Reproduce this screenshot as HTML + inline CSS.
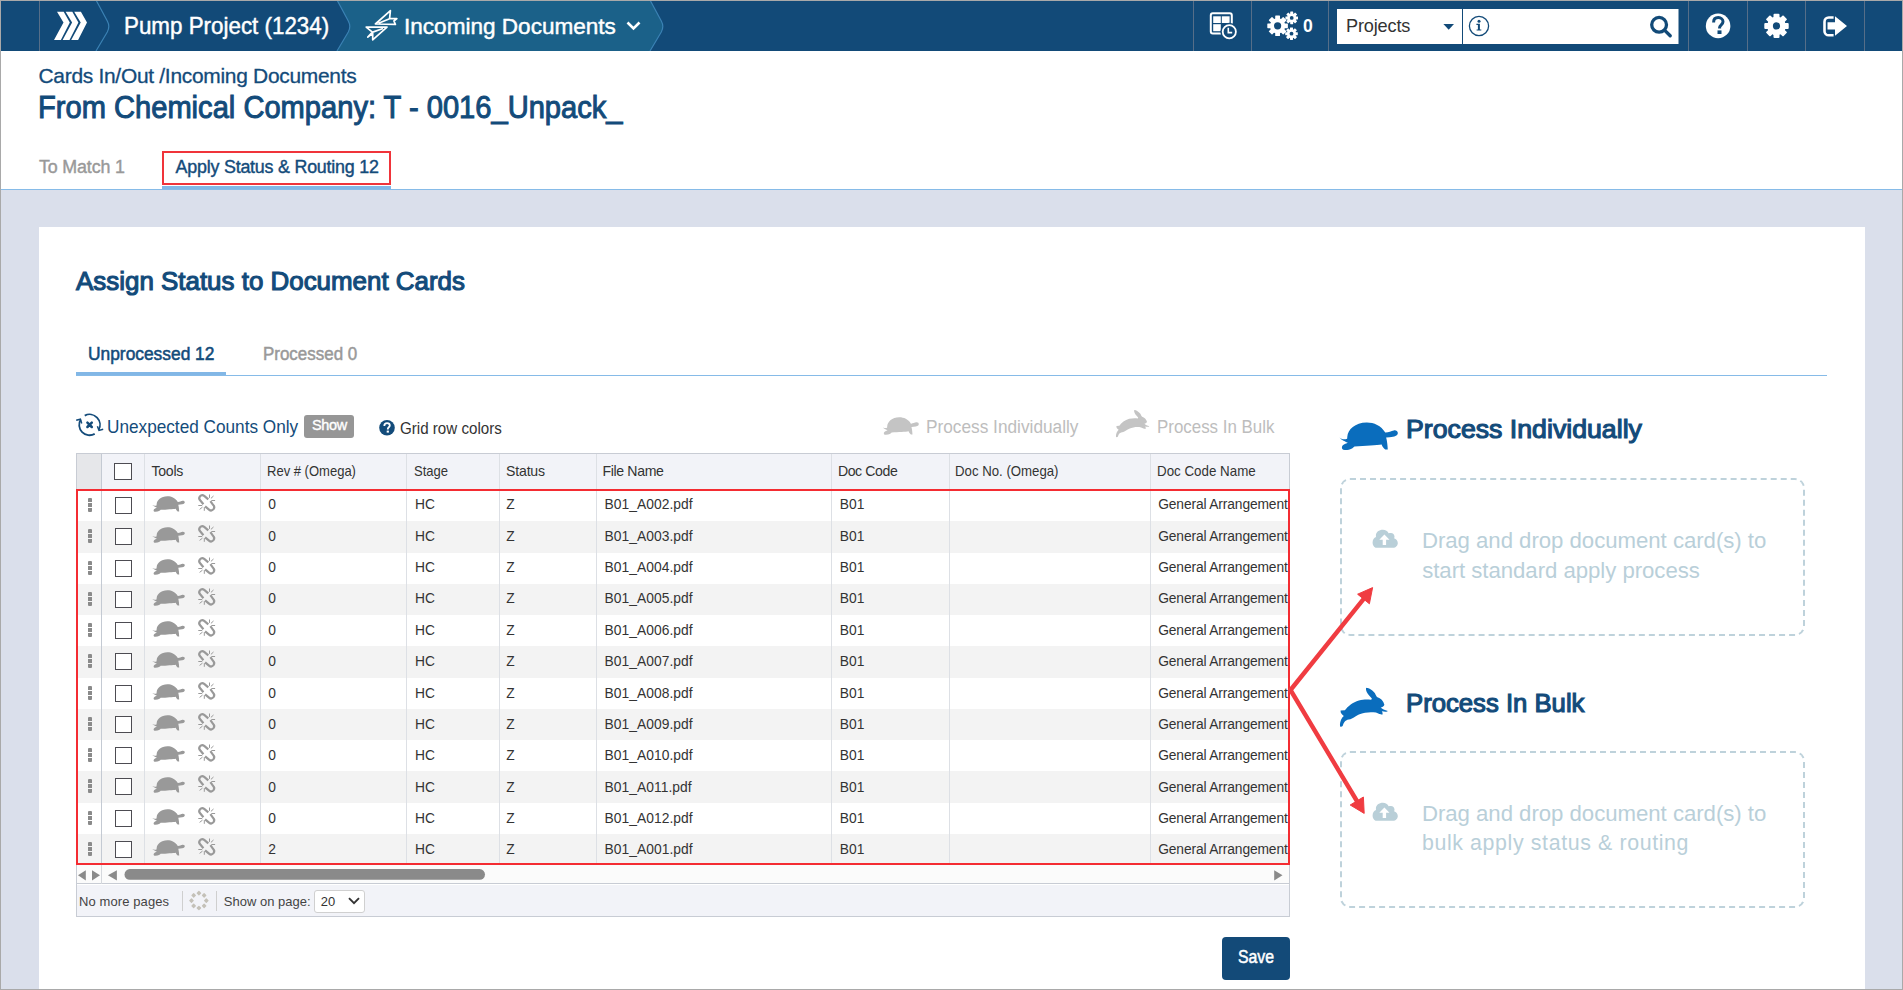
<!DOCTYPE html>
<html><head><meta charset="utf-8">
<style>
*{box-sizing:border-box;margin:0;padding:0}
html,body{width:1903px;height:990px;overflow:hidden;font-family:"Liberation Sans",sans-serif;background:#dadfeb;position:relative}
.abs{position:absolute}
svg.abs{overflow:visible}
#frame{position:absolute;left:0;top:0;width:1903px;height:990px;border:1px solid #a9a9a9;z-index:50;pointer-events:none}
#nav{position:absolute;left:0;top:0;width:1903px;height:51px;background:#124a78}
.t{position:absolute;white-space:nowrap;line-height:1;z-index:5}
.vd{position:absolute;top:1px;width:1px;height:50px;background:#566e88}
#hdr{position:absolute;left:0;top:51px;width:1903px;height:139px;background:#fff;border-bottom:1px solid #86bbe8}
#card{position:absolute;left:39px;top:227px;width:1826px;height:763px;background:#fff}
.row{position:absolute;left:77px;width:1211px;height:31.25px}
.bt{font-size:13.82px;letter-spacing:0.052px;color:#333}
.dh{position:absolute;left:88px;width:4px;height:14px;background:linear-gradient(#8a8a8a 0 3.6px,transparent 3.6px 5px,#8a8a8a 5px 8.6px,transparent 8.6px 10px,#8a8a8a 10px 13.8px,transparent 13.8px);border-radius:1px;z-index:4}
.cb{position:absolute;left:115px;width:17px;height:17px;border:1.6px solid #4d4c52;background:#fff;z-index:4}
.vl{position:absolute;width:1px;background:#dde0e5;z-index:3}
</style></head><body>
<svg width="0" height="0" style="position:absolute">
<defs>
<symbol id="turtle" viewBox="4 6.5 59 28.5" preserveAspectRatio="none">
<path d="M4.4,22.2 C6,23.8 9,24.6 12.1,23.4 L12.3,21 C12.8,14 20,7 31.5,6.9 C38.5,6.8 46,10 50.1,17 C53,17.2 56,15.5 58.6,15 C61,14.6 63,16 62.6,18.2 C62.2,20.5 59.5,21.5 54.5,21.8 L51,22.2 C52,26 52.5,31 52.6,34.3 L50.1,34.3 C48.5,33 47,31 46.5,29.1 C42,30 30,30.5 19.4,31.1 C18,32.5 16,34.5 10.1,34.7 C7.5,34.8 6.5,33.5 7,31.5 C7.5,29.5 11,28.2 12.9,27.5 C11,26.6 6,24.5 4.4,22.2 Z"/>
</symbol>
<symbol id="rabbit" viewBox="4.5 7 48.5 40" preserveAspectRatio="none">
<path d="M31.5,7.4 C34,7.5 38,10 40,13 C41,15 41.5,16.5 42.5,17 C45.5,18 48.5,20.5 49.4,24.5 C49,26 47.5,27 45.7,27.3 C47,28.8 50,30 52.8,30.8 C52.5,31.8 50,31.8 46.8,31.2 C47.5,32.2 48,33.5 47.3,34.6 C45.5,34.5 43.5,33.5 41,32.5 C36,31.5 30,32 24,34.5 C20,36.5 17.5,38.8 15.5,39.2 C11,39.5 9,42 8.2,45 C7.8,46.5 6.8,47 5.3,46.5 C4.8,44 5.5,40.5 7.5,37.5 L9,35.8 C7,34.5 5.5,33 5.8,30.5 L10,30.2 C13,26 18,22 24,20.2 C29,19 33,19.2 35.8,19.6 C37,19.5 37.2,18.5 36.5,17.8 C34,15 31.5,12.5 31.2,10 C31,8.5 31,7.6 31.5,7.4 Z"/>
</symbol>
<symbol id="unlink" viewBox="0 0 30 26">
<g fill="none" stroke="#999" stroke-width="2.2" stroke-linecap="butt">
<path d="M16.3,9.4 L12.2,5.9 C10.6,4.6 8.9,5.2 7.9,6.4 C7,7.6 7.1,9.4 8.4,10.6 L11.4,14.2"/>
<path d="M13.1,16.3 L17,19.6 C18.6,20.9 20.4,20.4 21.5,19.1 C22.5,17.8 22.3,16 21,14.8 L18.4,11.2"/>
</g>
<g fill="none" stroke="#999" stroke-width="1">
<path d="M17.5,4.5 V7.9 M18.9,8.4 L21.5,6 M19.4,10.5 H23.1 M6.3,15.5 H10.2 M7.6,19.4 L10.5,17.1 M12.3,17.1 V20.8"/>
</g>
</symbol>
</defs>
</svg>

<div id="nav">
  <div class="vd" style="left:39px"></div>
  <svg class="abs" style="left:0;top:0" width="700" height="51">
    <path d="M337,0 H650 L661.3,21 Q664.3,26.5 661.3,32 L650,51 H337 L348.3,32 Q351.3,26.5 348.3,21 Z" fill="#1b6189"/>
    <path d="M96,0 L107.3,21 Q110.3,26.5 107.3,32 L96,51" fill="none" stroke="#3b82b4" stroke-width="1.2"/>
    <path d="M337,0 L348.3,21 Q351.3,26.5 348.3,32 L337,51" fill="none" stroke="#3b82b4" stroke-width="1.2"/>
    <path d="M650,0 L661.3,21 Q664.3,26.5 661.3,32 L650,51" fill="none" stroke="#3b82b4" stroke-width="1.2"/>
    <g fill="#fff">
      <polygon points="57,11.7 63.7,11.7 69.8,22.4 60.9,40 54,40 63.5,22.4"/>
      <polygon points="65.6,11.7 72.3,11.7 78.4,22.4 69.5,40 62.6,40 72.1,22.4"/>
      <polygon points="74.2,11.7 80.9,11.7 87,22.4 78.1,40 71.2,40 80.7,22.4"/>
    </g>
    <g fill="none" stroke="#fff" stroke-width="1.7" stroke-linejoin="round">
      <path d="M390.4,10.6 L375.4,24 L395.4,24.4 L393.9,21 L396.9,18.7 L389.6,18.3 Z M389.6,18.7 L378.5,23.3"/>
      <path d="M372.7,39.8 L387,27.1 L366.2,27.1 L372.4,32.1 L367.8,37.1 L372.7,33.3 Z M372.7,32.1 L383,28.5"/>
    </g>
    <path d="M627.5,22.5 L633.5,28.5 L639.5,22.5" fill="none" stroke="#fff" stroke-width="2.6"/>
  </svg>
  <!-- right side -->
  <div class="vd" style="left:1193px"></div>
  <div class="vd" style="left:1251px"></div>
  <div class="vd" style="left:1328px"></div>
  <div class="vd" style="left:1688px"></div>
  <div class="vd" style="left:1747px"></div>
  <div class="vd" style="left:1805px"></div>
  <div class="vd" style="left:1864px"></div>
  <svg class="abs" style="left:1190px;top:0" width="713" height="51">
    <!-- dashboard -->
    <rect x="20.8" y="13.3" width="21" height="20.3" rx="2" fill="none" stroke="#fff" stroke-width="2"/>
    <rect x="23.2" y="16.3" width="7.6" height="6.7" fill="#fff"/>
    <rect x="31.8" y="16.3" width="7.8" height="6.7" fill="#fff"/>
    <rect x="23.2" y="24.2" width="7.6" height="7" fill="#fff"/>
    <circle cx="39.3" cy="31.8" r="9" fill="#124a78"/>
    <circle cx="39.3" cy="31.8" r="6.6" fill="#124a78" stroke="#fff" stroke-width="1.8"/>
    <path d="M38.3,27.8 V32.6 H42.2" fill="none" stroke="#fff" stroke-width="1.6"/>
    <!-- gears -->
    <g fill="#fff">
      <g transform="translate(87.6,25.8)">
        <circle r="7.6"/>
        <g id="teethB"><rect x="-2.4" y="-10.3" width="4.8" height="20.6" rx="0.6"/><rect x="-2.4" y="-10.3" width="4.8" height="20.6" rx="0.6" transform="rotate(45)"/><rect x="-2.4" y="-10.3" width="4.8" height="20.6" rx="0.6" transform="rotate(90)"/><rect x="-2.4" y="-10.3" width="4.8" height="20.6" rx="0.6" transform="rotate(135)"/></g>
        <circle r="3.6" fill="#124a78"/>
      </g>
      <g transform="translate(101.7,17.9)">
        <circle r="4.5"/>
        <rect x="-1.5" y="-6.3" width="3" height="12.6" rx="0.4"/><rect x="-1.5" y="-6.3" width="3" height="12.6" rx="0.4" transform="rotate(45)"/><rect x="-1.5" y="-6.3" width="3" height="12.6" rx="0.4" transform="rotate(90)"/><rect x="-1.5" y="-6.3" width="3" height="12.6" rx="0.4" transform="rotate(135)"/>
        <circle r="1.9" fill="#124a78"/>
      </g>
      <g transform="translate(101.5,33.7)">
        <circle r="4.5"/>
        <rect x="-1.5" y="-6.3" width="3" height="12.6" rx="0.4"/><rect x="-1.5" y="-6.3" width="3" height="12.6" rx="0.4" transform="rotate(45)"/><rect x="-1.5" y="-6.3" width="3" height="12.6" rx="0.4" transform="rotate(90)"/><rect x="-1.5" y="-6.3" width="3" height="12.6" rx="0.4" transform="rotate(135)"/>
        <circle r="1.9" fill="#124a78"/>
      </g>
    </g>
    <!-- select + search -->
    <rect x="147" y="9" width="125" height="35" fill="#fff"/>
    <path d="M253.4,24 H264 L258.7,29.8 Z" fill="#124a78"/>
    <rect x="273" y="9" width="215.5" height="35" fill="#fff"/>
    <circle cx="289" cy="26" r="9.6" fill="none" stroke="#124a78" stroke-width="1.3"/>
    <circle cx="289" cy="21.2" r="1.5" fill="#124a78"/>
    <path d="M286.4,23.8 H289.9 V29.4 H291.3 V30.6 H286.6 V29.4 H287.9 V25 H286.4 Z" fill="#124a78"/>
    <circle cx="469.1" cy="24.8" r="7.4" fill="none" stroke="#124a78" stroke-width="3.3"/>
    <path d="M475,30.6 L480.2,35.7" stroke="#124a78" stroke-width="3.4" stroke-linecap="round"/>
    <!-- help -->
    <circle cx="528.1" cy="25.9" r="12.3" fill="#fff"/>
    <path d="M523.6,22.4 C523.6,19.2 525.7,17.6 528.3,17.6 C531,17.6 533,19.3 533,21.8 C533,24.6 529.6,25 529.6,27.5 V28.4" fill="none" stroke="#124a78" stroke-width="3"/>
    <rect x="527.5" y="30.4" width="4" height="3.6" fill="#124a78"/>
    <!-- gear -->
    <g transform="translate(586.5,25.9)" fill="#fff">
      <circle r="9.3"/>
      <rect x="-3" y="-12.2" width="6" height="24.4" rx="1"/><rect x="-3" y="-12.2" width="6" height="24.4" rx="1" transform="rotate(45)"/><rect x="-3" y="-12.2" width="6" height="24.4" rx="1" transform="rotate(90)"/><rect x="-3" y="-12.2" width="6" height="24.4" rx="1" transform="rotate(135)"/>
      <circle r="3.6" fill="#124a78"/>
    </g>
    <!-- sign out -->
    <path d="M643.6,17.5 H638.8 C636.3,17.5 634.5,19.3 634.5,21.8 V31.2 C634.5,33.6 636.3,35.3 638.8,35.3 H643.6" fill="none" stroke="#fff" stroke-width="2.6"/>
    <path d="M637.5,22.3 H645 V16.3 L657,26 L645,35.8 V29.6 H637.5 Z" fill="#fff"/>
  </svg>
</div>

<div id="hdr">
  <div class="abs" style="left:162px;top:100px;width:229px;height:33.5px;border:2px solid #f0343a;z-index:6"></div>
  <div class="abs" style="left:162px;top:135px;width:229px;height:3px;background:#82b7e6"></div>
</div>

<div id="card"></div>

<!-- subtabs -->
<div class="abs" style="left:76px;top:375px;width:1751px;height:1px;background:#86bbe8"></div>
<div class="abs" style="left:76px;top:372px;width:150px;height:3px;background:#82b7e6"></div>

<!-- toolbar -->
<svg class="abs" style="left:72px;top:408px" width="36" height="32">
  <g fill="none" stroke="#134b7a" stroke-width="1.8">
  <path d="M12.72,7.62 A10.4,10.4 0 0 1 26.6,22"/>
  <path d="M22.7,25.9 A10.4,10.4 0 0 1 8.68,11.46"/>
  </g>
  <g fill="none" stroke="#134b7a" stroke-width="1.5" stroke-linejoin="miter">
  <path d="M25.4,18.2 L27,22.4 L31.2,21.3"/>
  <path d="M4.2,12.3 L8.4,11.2 L9.7,15.5"/>
  </g>
  <path d="M15.4,14.6 L19.8,19 M19.8,14.6 L15.4,19" stroke="#134b7a" stroke-width="2.5" stroke-linecap="round"/>
</svg>
<div class="abs" style="left:304px;top:415px;width:50px;height:22.5px;background:#969696;border-radius:3px"></div>
<svg class="abs" style="left:378px;top:419px" width="18" height="18">
  <circle cx="9" cy="8.7" r="7.8" fill="#134b7a"/>
  <path d="M6.3,6.9 C6.3,5 7.5,4.1 9.1,4.1 C10.7,4.1 11.8,5.1 11.8,6.5 C11.8,8.1 9.8,8.4 9.8,9.9 V10.4" fill="none" stroke="#fff" stroke-width="1.8"/>
  <rect x="8.7" y="11.6" width="2.2" height="2" fill="#fff"/>
</svg>
<svg class="abs" style="left:880px;top:415px" width="42" height="22"><use href="#turtle" x="2" y="2" width="37" height="18" fill="#c4c4c4"/></svg>
<svg class="abs" style="left:1113px;top:408px" width="40" height="32"><use href="#rabbit" x="2.5" y="1.7" width="34" height="27.8" fill="#c4c4c4"/></svg>

<!-- table -->
<div class="abs" style="left:76px;top:453px;width:1214px;height:464px;border:1px solid #c8ccd4;background:#fff"></div>
<div class="abs" style="left:77px;top:454px;width:1212px;height:35px;background:#f2f3f8"></div>
<div class="abs" style="left:77px;top:454px;width:24px;height:35px;background:#e6e7ea"></div>
<div class="cb" style="top:463px;left:114px;width:18px"></div>
<div class="row" style="top:490.00px;background:#fff"></div>
<div class="t bt" style="left:268.3px;top:498.40px">0</div>
<div class="t bt" style="left:414.9px;top:498.40px">HC</div>
<div class="t bt" style="left:506.3px;top:498.40px">Z</div>
<div class="t bt" style="left:604.5px;top:498.40px">B01_A002.pdf</div>
<div class="t bt" style="left:839.8px;top:498.40px">B01</div>
<div class="t bt" style="left:1158.2px;top:498.40px;width:130px;height:18px;overflow:hidden;letter-spacing:-0.138px">General Arrangement</div>
<div class="dh" style="top:498.20px"></div>
<div class="cb" style="top:497.10px"></div>
<svg class="abs" style="left:152px;top:496.00px;z-index:4" width="34" height="17"><use href="#turtle" width="33" height="16" fill="#999"/></svg>
<svg class="abs" style="left:192px;top:490.00px;z-index:4" width="30" height="26"><use href="#unlink"/></svg>
<div class="row" style="top:521.25px;background:#f3f3f3"></div>
<div class="t bt" style="left:268.3px;top:529.76px">0</div>
<div class="t bt" style="left:414.9px;top:529.76px">HC</div>
<div class="t bt" style="left:506.3px;top:529.76px">Z</div>
<div class="t bt" style="left:604.5px;top:529.76px">B01_A003.pdf</div>
<div class="t bt" style="left:839.8px;top:529.76px">B01</div>
<div class="t bt" style="left:1158.2px;top:529.76px;width:130px;height:18px;overflow:hidden;letter-spacing:-0.138px">General Arrangement</div>
<div class="dh" style="top:529.45px"></div>
<div class="cb" style="top:528.35px"></div>
<svg class="abs" style="left:152px;top:527.25px;z-index:4" width="34" height="17"><use href="#turtle" width="33" height="16" fill="#999"/></svg>
<svg class="abs" style="left:192px;top:521.25px;z-index:4" width="30" height="26"><use href="#unlink"/></svg>
<div class="row" style="top:552.50px;background:#fff"></div>
<div class="t bt" style="left:268.3px;top:561.12px">0</div>
<div class="t bt" style="left:414.9px;top:561.12px">HC</div>
<div class="t bt" style="left:506.3px;top:561.12px">Z</div>
<div class="t bt" style="left:604.5px;top:561.12px">B01_A004.pdf</div>
<div class="t bt" style="left:839.8px;top:561.12px">B01</div>
<div class="t bt" style="left:1158.2px;top:561.12px;width:130px;height:18px;overflow:hidden;letter-spacing:-0.138px">General Arrangement</div>
<div class="dh" style="top:560.70px"></div>
<div class="cb" style="top:559.60px"></div>
<svg class="abs" style="left:152px;top:558.50px;z-index:4" width="34" height="17"><use href="#turtle" width="33" height="16" fill="#999"/></svg>
<svg class="abs" style="left:192px;top:552.50px;z-index:4" width="30" height="26"><use href="#unlink"/></svg>
<div class="row" style="top:583.75px;background:#f3f3f3"></div>
<div class="t bt" style="left:268.3px;top:592.48px">0</div>
<div class="t bt" style="left:414.9px;top:592.48px">HC</div>
<div class="t bt" style="left:506.3px;top:592.48px">Z</div>
<div class="t bt" style="left:604.5px;top:592.48px">B01_A005.pdf</div>
<div class="t bt" style="left:839.8px;top:592.48px">B01</div>
<div class="t bt" style="left:1158.2px;top:592.48px;width:130px;height:18px;overflow:hidden;letter-spacing:-0.138px">General Arrangement</div>
<div class="dh" style="top:591.95px"></div>
<div class="cb" style="top:590.85px"></div>
<svg class="abs" style="left:152px;top:589.75px;z-index:4" width="34" height="17"><use href="#turtle" width="33" height="16" fill="#999"/></svg>
<svg class="abs" style="left:192px;top:583.75px;z-index:4" width="30" height="26"><use href="#unlink"/></svg>
<div class="row" style="top:615.00px;background:#fff"></div>
<div class="t bt" style="left:268.3px;top:623.84px">0</div>
<div class="t bt" style="left:414.9px;top:623.84px">HC</div>
<div class="t bt" style="left:506.3px;top:623.84px">Z</div>
<div class="t bt" style="left:604.5px;top:623.84px">B01_A006.pdf</div>
<div class="t bt" style="left:839.8px;top:623.84px">B01</div>
<div class="t bt" style="left:1158.2px;top:623.84px;width:130px;height:18px;overflow:hidden;letter-spacing:-0.138px">General Arrangement</div>
<div class="dh" style="top:623.20px"></div>
<div class="cb" style="top:622.10px"></div>
<svg class="abs" style="left:152px;top:621.00px;z-index:4" width="34" height="17"><use href="#turtle" width="33" height="16" fill="#999"/></svg>
<svg class="abs" style="left:192px;top:615.00px;z-index:4" width="30" height="26"><use href="#unlink"/></svg>
<div class="row" style="top:646.25px;background:#f3f3f3"></div>
<div class="t bt" style="left:268.3px;top:655.20px">0</div>
<div class="t bt" style="left:414.9px;top:655.20px">HC</div>
<div class="t bt" style="left:506.3px;top:655.20px">Z</div>
<div class="t bt" style="left:604.5px;top:655.20px">B01_A007.pdf</div>
<div class="t bt" style="left:839.8px;top:655.20px">B01</div>
<div class="t bt" style="left:1158.2px;top:655.20px;width:130px;height:18px;overflow:hidden;letter-spacing:-0.138px">General Arrangement</div>
<div class="dh" style="top:654.45px"></div>
<div class="cb" style="top:653.35px"></div>
<svg class="abs" style="left:152px;top:652.25px;z-index:4" width="34" height="17"><use href="#turtle" width="33" height="16" fill="#999"/></svg>
<svg class="abs" style="left:192px;top:646.25px;z-index:4" width="30" height="26"><use href="#unlink"/></svg>
<div class="row" style="top:677.50px;background:#fff"></div>
<div class="t bt" style="left:268.3px;top:686.56px">0</div>
<div class="t bt" style="left:414.9px;top:686.56px">HC</div>
<div class="t bt" style="left:506.3px;top:686.56px">Z</div>
<div class="t bt" style="left:604.5px;top:686.56px">B01_A008.pdf</div>
<div class="t bt" style="left:839.8px;top:686.56px">B01</div>
<div class="t bt" style="left:1158.2px;top:686.56px;width:130px;height:18px;overflow:hidden;letter-spacing:-0.138px">General Arrangement</div>
<div class="dh" style="top:685.70px"></div>
<div class="cb" style="top:684.60px"></div>
<svg class="abs" style="left:152px;top:683.50px;z-index:4" width="34" height="17"><use href="#turtle" width="33" height="16" fill="#999"/></svg>
<svg class="abs" style="left:192px;top:677.50px;z-index:4" width="30" height="26"><use href="#unlink"/></svg>
<div class="row" style="top:708.75px;background:#f3f3f3"></div>
<div class="t bt" style="left:268.3px;top:717.92px">0</div>
<div class="t bt" style="left:414.9px;top:717.92px">HC</div>
<div class="t bt" style="left:506.3px;top:717.92px">Z</div>
<div class="t bt" style="left:604.5px;top:717.92px">B01_A009.pdf</div>
<div class="t bt" style="left:839.8px;top:717.92px">B01</div>
<div class="t bt" style="left:1158.2px;top:717.92px;width:130px;height:18px;overflow:hidden;letter-spacing:-0.138px">General Arrangement</div>
<div class="dh" style="top:716.95px"></div>
<div class="cb" style="top:715.85px"></div>
<svg class="abs" style="left:152px;top:714.75px;z-index:4" width="34" height="17"><use href="#turtle" width="33" height="16" fill="#999"/></svg>
<svg class="abs" style="left:192px;top:708.75px;z-index:4" width="30" height="26"><use href="#unlink"/></svg>
<div class="row" style="top:740.00px;background:#fff"></div>
<div class="t bt" style="left:268.3px;top:749.28px">0</div>
<div class="t bt" style="left:414.9px;top:749.28px">HC</div>
<div class="t bt" style="left:506.3px;top:749.28px">Z</div>
<div class="t bt" style="left:604.5px;top:749.28px">B01_A010.pdf</div>
<div class="t bt" style="left:839.8px;top:749.28px">B01</div>
<div class="t bt" style="left:1158.2px;top:749.28px;width:130px;height:18px;overflow:hidden;letter-spacing:-0.138px">General Arrangement</div>
<div class="dh" style="top:748.20px"></div>
<div class="cb" style="top:747.10px"></div>
<svg class="abs" style="left:152px;top:746.00px;z-index:4" width="34" height="17"><use href="#turtle" width="33" height="16" fill="#999"/></svg>
<svg class="abs" style="left:192px;top:740.00px;z-index:4" width="30" height="26"><use href="#unlink"/></svg>
<div class="row" style="top:771.25px;background:#f3f3f3"></div>
<div class="t bt" style="left:268.3px;top:780.64px">0</div>
<div class="t bt" style="left:414.9px;top:780.64px">HC</div>
<div class="t bt" style="left:506.3px;top:780.64px">Z</div>
<div class="t bt" style="left:604.5px;top:780.64px">B01_A011.pdf</div>
<div class="t bt" style="left:839.8px;top:780.64px">B01</div>
<div class="t bt" style="left:1158.2px;top:780.64px;width:130px;height:18px;overflow:hidden;letter-spacing:-0.138px">General Arrangement</div>
<div class="dh" style="top:779.45px"></div>
<div class="cb" style="top:778.35px"></div>
<svg class="abs" style="left:152px;top:777.25px;z-index:4" width="34" height="17"><use href="#turtle" width="33" height="16" fill="#999"/></svg>
<svg class="abs" style="left:192px;top:771.25px;z-index:4" width="30" height="26"><use href="#unlink"/></svg>
<div class="row" style="top:802.50px;background:#fff"></div>
<div class="t bt" style="left:268.3px;top:812.00px">0</div>
<div class="t bt" style="left:414.9px;top:812.00px">HC</div>
<div class="t bt" style="left:506.3px;top:812.00px">Z</div>
<div class="t bt" style="left:604.5px;top:812.00px">B01_A012.pdf</div>
<div class="t bt" style="left:839.8px;top:812.00px">B01</div>
<div class="t bt" style="left:1158.2px;top:812.00px;width:130px;height:18px;overflow:hidden;letter-spacing:-0.138px">General Arrangement</div>
<div class="dh" style="top:810.70px"></div>
<div class="cb" style="top:809.60px"></div>
<svg class="abs" style="left:152px;top:808.50px;z-index:4" width="34" height="17"><use href="#turtle" width="33" height="16" fill="#999"/></svg>
<svg class="abs" style="left:192px;top:802.50px;z-index:4" width="30" height="26"><use href="#unlink"/></svg>
<div class="row" style="top:833.75px;background:#f3f3f3"></div>
<div class="t bt" style="left:268.3px;top:843.36px">2</div>
<div class="t bt" style="left:414.9px;top:843.36px">HC</div>
<div class="t bt" style="left:506.3px;top:843.36px">Z</div>
<div class="t bt" style="left:604.5px;top:843.36px">B01_A001.pdf</div>
<div class="t bt" style="left:839.8px;top:843.36px">B01</div>
<div class="t bt" style="left:1158.2px;top:843.36px;width:130px;height:18px;overflow:hidden;letter-spacing:-0.138px">General Arrangement</div>
<div class="dh" style="top:841.95px"></div>
<div class="cb" style="top:840.85px"></div>
<svg class="abs" style="left:152px;top:839.75px;z-index:4" width="34" height="17"><use href="#turtle" width="33" height="16" fill="#999"/></svg>
<svg class="abs" style="left:192px;top:833.75px;z-index:4" width="30" height="26"><use href="#unlink"/></svg>
<!-- column dividers -->
<div class="vl" style="left:101px;top:454px;height:410px;background:#c4cad3"></div>
<div class="vl" style="left:144px;top:454px;height:410px"></div>
<div class="vl" style="left:260px;top:454px;height:410px"></div>
<div class="vl" style="left:406px;top:454px;height:410px"></div>
<div class="vl" style="left:499px;top:454px;height:410px"></div>
<div class="vl" style="left:596px;top:454px;height:410px"></div>
<div class="vl" style="left:831px;top:454px;height:410px"></div>
<div class="vl" style="left:949px;top:454px;height:410px"></div>
<div class="vl" style="left:1150px;top:454px;height:410px"></div>
<!-- red box -->
<div class="abs" style="left:76px;top:489px;width:1214px;height:376px;border:2px solid #f42c32;z-index:8"></div>
<!-- scrollbar -->
<div class="abs" style="left:77px;top:865px;width:1212px;height:19px;background:#fbfbfb;border-bottom:1px solid #c8ccd4"></div>
<div class="vl" style="left:101px;top:865px;height:19px;background:#d5d8dd"></div>
<svg class="abs" style="left:76px;top:865px" width="1214" height="20">
  <path d="M2,10.3 L9.8,5.2 V15.4 Z" fill="#8a8a8a"/>
  <path d="M24,10.3 L16,5.2 V15.4 Z" fill="#8a8a8a"/>
  <path d="M31.9,10.3 L40.9,5.2 V15.4 Z" fill="#8a8a8a"/>
  <rect x="48.5" y="4.1" width="360.5" height="10.6" rx="5.3" fill="#8a8a8a"/>
  <path d="M1206.5,10.3 L1198.2,5.2 V15.4 Z" fill="#8a8a8a"/>
</svg>
<!-- footer -->
<div class="abs" style="left:77px;top:885px;width:1212px;height:31px;background:#f2f3f8"></div>
<div class="abs" style="left:182px;top:891px;width:1px;height:20px;background:#cfcfcf"></div>
<div class="abs" style="left:216px;top:891px;width:1px;height:20px;background:#cfcfcf"></div>
<svg class="abs" style="left:188px;top:890px" width="22" height="22"><g fill="#c4c1b8"><rect x="16.50" y="8.80" width="3.6" height="3.6" rx="0.6" transform="rotate(45 18.30 10.60)"/><rect x="14.33" y="14.03" width="3.6" height="3.6" rx="0.6" transform="rotate(45 16.13 15.83)"/><rect x="9.10" y="16.20" width="3.6" height="3.6" rx="0.6" transform="rotate(45 10.90 18.00)"/><rect x="3.87" y="14.03" width="3.6" height="3.6" rx="0.6" transform="rotate(45 5.67 15.83)"/><rect x="1.70" y="8.80" width="3.6" height="3.6" rx="0.6" transform="rotate(45 3.50 10.60)"/><rect x="3.87" y="3.57" width="3.6" height="3.6" rx="0.6" transform="rotate(45 5.67 5.37)"/><rect x="9.10" y="1.40" width="3.6" height="3.6" rx="0.6" transform="rotate(45 10.90 3.20)"/><rect x="14.33" y="3.57" width="3.6" height="3.6" rx="0.6" transform="rotate(45 16.13 5.37)"/></g></svg>
<div class="abs" style="left:314px;top:890px;width:50.5px;height:22.5px;background:#fff;border:1px solid #d0d0d0;border-radius:3px"></div>
<svg class="abs" style="left:347px;top:896px" width="14" height="10"><path d="M2,2.2 L7,7.2 L12,2.2" fill="none" stroke="#333" stroke-width="1.9"/></svg>
<!-- save -->
<div class="abs" style="left:1222px;top:937px;width:68px;height:43px;background:#134a78;border-radius:4px"></div>

<!-- right panel -->
<svg class="abs" style="left:1339px;top:421.5px" width="60" height="29"><use href="#turtle" x="0" y="0" width="59.2" height="28.3" fill="#0a6dbd"/></svg>
<svg class="abs" style="left:1339px;top:687px" width="50" height="41"><use href="#rabbit" x="0.3" y="0.3" width="48.7" height="39.7" fill="#0a6dbd"/></svg>
<div class="abs" style="left:1340px;top:478px;width:465px;height:158px;border:2px dashed #bed2db;border-radius:10px"></div>
<div class="abs" style="left:1340px;top:751px;width:465px;height:157px;border:2px dashed #bed2db;border-radius:10px"></div>
<svg class="abs" style="left:1368px;top:524px" width="34" height="28"><use href="#cloud"/></svg>
<svg class="abs" style="left:1368px;top:796.8px" width="34" height="28"><use href="#cloud"/></svg>
<svg width="0" height="0" style="position:absolute"><defs>
<symbol id="cloud" viewBox="0 0 34 28">
<path d="M8.5,23.8 C6,23.8 4.6,21 4.6,18.5 C4.6,16 6,13.9 8,13.1 C7.9,12.5 7.9,12 7.9,11.5 C7.9,8.2 11,5.8 14.9,5.8 C17.5,5.8 19.7,7.2 20.6,9.3 C21.3,9 22.1,8.9 22.9,8.9 C25,8.9 26.5,10.6 26.5,12.6 C26.5,13.2 26.4,13.8 26.1,14.3 C28.2,15 29.8,16.8 29.8,19 C29.8,21.6 27.8,23.8 25,23.8 Z" fill="#b9cfd8"/>
<path d="M16.4,10.5 L11.3,15.8 H14.7 V20.9 H18.1 V15.8 H21.5 Z" fill="#fff"/>
</symbol></defs></svg>

<!-- red arrows -->
<svg class="abs" style="left:0;top:0;z-index:9" width="1903" height="990">
  <g stroke="#f03c41" stroke-width="4.4" fill="none" stroke-linecap="round" stroke-linejoin="round">
    <path d="M1364.5,597.8 L1290.5,690 L1357.5,802"/>
  </g>
  <path d="M1372.6,587.6 L1369.4,603.8 L1357.6,594.2 Z" fill="#f03c41" stroke="#f03c41" stroke-width="1" stroke-linejoin="round"/>
  <path d="M1364.2,813.4 L1350.2,805 L1363.4,797 Z" fill="#f03c41" stroke="#f03c41" stroke-width="1" stroke-linejoin="round"/>
</svg>

<div class="t" style="left:123.85px;top:14.89px;font-size:23.52px;color:#fff;-webkit-text-stroke-width:0.45px;transform:scaleX(0.9514);transform-origin:0 0;">Pump Project (1234)</div>
<div class="t" style="left:403.53px;top:15.32px;font-size:22.89px;color:#fff;-webkit-text-stroke-width:0.45px;transform:scaleX(0.9862);transform-origin:0 0;">Incoming Documents</div>
<div class="t" style="left:1346px;top:16.64px;font-size:18.14px;color:#333;letter-spacing:-0.159px;">Projects</div>
<div class="t" style="left:1303px;top:17.81px;font-size:17.59px;color:#fff;font-weight:bold;">0</div>
<div class="t" style="left:38.5px;top:66.27px;font-size:20.94px;color:#134b7a;letter-spacing:-0.284px;-webkit-text-stroke-width:0.3px;">Cards In/Out /Incoming Documents</div>
<div class="t" style="left:37.61px;top:92.78px;font-size:30.84px;color:#134b7a;-webkit-text-stroke-width:1.0px;transform:scaleX(0.9441);transform-origin:0 0;">From Chemical Company: T - 0016_Unpack_</div>
<div class="t" style="left:39px;top:158.67px;font-size:17.86px;color:#999;letter-spacing:-0.158px;-webkit-text-stroke-width:0.4px;">To Match 1</div>
<div class="t" style="left:175.6px;top:158.67px;font-size:17.86px;color:#134b7a;letter-spacing:-0.215px;-webkit-text-stroke-width:0.4px;">Apply Status &amp; Routing 12</div>
<div class="t" style="left:76.4px;top:268.37px;font-size:26.38px;color:#134b7a;-webkit-text-stroke-width:1.15px;transform:scaleX(0.9828);transform-origin:0 0;">Assign Status to Document Cards</div>
<div class="t" style="left:88.26px;top:344.58px;font-size:18.56px;color:#134b7a;-webkit-text-stroke-width:0.55px;transform:scaleX(0.9361);transform-origin:0 0;">Unprocessed 12</div>
<div class="t" style="left:263.29px;top:344.58px;font-size:18.56px;color:#999;-webkit-text-stroke-width:0.5px;transform:scaleX(0.9137);transform-origin:0 0;">Processed 0</div>
<div class="t" style="left:106.86px;top:417.62px;font-size:18.28px;color:#134b7a;transform:scaleX(0.9412);transform-origin:0 0;">Unexpected Counts Only</div>
<div class="t" style="left:312px;top:418.41px;font-size:14.52px;color:#fff;letter-spacing:-0.367px;-webkit-text-stroke-width:0.35px;">Show</div>
<div class="t" style="left:399.7px;top:419.86px;font-size:16.47px;color:#333;transform:scaleX(0.9203);transform-origin:0 0;">Grid row colors</div>
<div class="t" style="left:925.5px;top:417.19px;font-size:19.26px;color:#bdbdbd;transform:scaleX(0.8962);transform-origin:0 0;">Process Individually</div>
<div class="t" style="left:1156.72px;top:417.19px;font-size:19.26px;color:#bdbdbd;transform:scaleX(0.8775);transform-origin:0 0;">Process In Bulk</div>
<div class="t" style="left:151.5px;top:464.26px;font-size:14.1px;color:#333333;letter-spacing:-0.281px;">Tools</div>
<div class="t" style="left:266.78px;top:464.26px;font-size:14.1px;color:#333333;transform:scaleX(0.9234);transform-origin:0 0;">Rev # (Omega)</div>
<div class="t" style="left:413.8px;top:464.26px;font-size:14.1px;color:#333333;transform:scaleX(0.9253);transform-origin:0 0;">Stage</div>
<div class="t" style="left:506px;top:464.26px;font-size:14.1px;color:#333333;letter-spacing:-0.174px;">Status</div>
<div class="t" style="left:602.5px;top:464.26px;font-size:14.1px;color:#333333;letter-spacing:-0.352px;">File Name</div>
<div class="t" style="left:837.9px;top:464.26px;font-size:14.1px;color:#333333;letter-spacing:-0.396px;">Doc Code</div>
<div class="t" style="left:955.26px;top:464.26px;font-size:14.1px;color:#333333;transform:scaleX(0.9372);transform-origin:0 0;">Doc No. (Omega)</div>
<div class="t" style="left:1156.55px;top:464.26px;font-size:14.1px;color:#333333;transform:scaleX(0.9473);transform-origin:0 0;">Doc Code Name</div>
<div class="t" style="left:1406.13px;top:416.74px;font-size:25.82px;color:#134b7a;-webkit-text-stroke-width:1.15px;transform:scaleX(1.0342);transform-origin:0 0;">Process Individually</div>
<div class="t" style="left:1406.23px;top:689.8px;font-size:26.1px;color:#134b7a;-webkit-text-stroke-width:1.15px;transform:scaleX(0.9843);transform-origin:0 0;">Process In Bulk</div>
<div class="t" style="left:1421.9px;top:529.91px;font-size:22.19px;color:#b9cfd9;letter-spacing:-0.027px;">Drag and drop document card(s) to</div>
<div class="t" style="left:1422.2px;top:559.71px;font-size:22.19px;color:#b9cfd9;letter-spacing:-0.038px;">start standard apply process</div>
<div class="t" style="left:1421.9px;top:802.51px;font-size:22.19px;color:#b9cfd9;letter-spacing:-0.027px;">Drag and drop document card(s) to</div>
<div class="t" style="left:1421.9px;top:832.62px;font-size:21.35px;color:#b9cfd9;letter-spacing:0.624px;">bulk apply status &amp; routing</div>
<div class="t" style="left:79px;top:894.71px;font-size:12.98px;color:#444;letter-spacing:0.118px;">No more pages</div>
<div class="t" style="left:223.8px;top:894.71px;font-size:12.98px;color:#444;letter-spacing:0.023px;">Show on page:</div>
<div class="t" style="left:320.7px;top:894.71px;font-size:12.98px;color:#333;">20</div>
<div class="t" style="left:1238.2px;top:948.88px;font-size:17.73px;color:#fff;-webkit-text-stroke-width:0.5px;transform:scaleX(0.8931);transform-origin:0 0;">Save</div>
<div id="frame"></div>
</body></html>
